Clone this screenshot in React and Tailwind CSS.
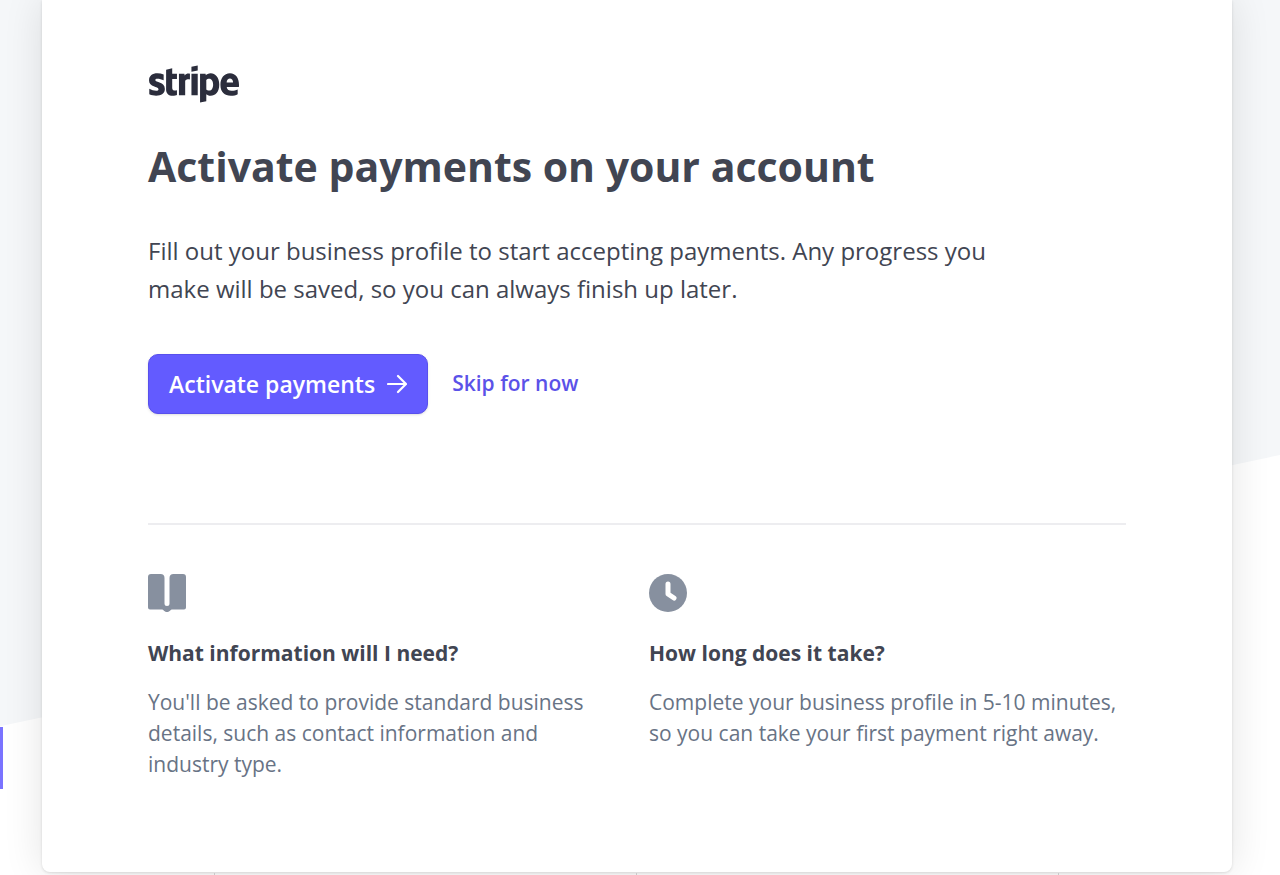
import { FaStripe } from "react-icons/fa"

const BookIcon = () => (
  <svg viewBox="0 0 38 38" className="h-[38px] w-[38px]" fill="currentColor" aria-hidden="true">
    <path d="M3 0h9.500a4 4 0 0 1 4 4v25.500a2.500 2.500 0 0 0 5 0V4a4 4 0 0 1 4-4H35a3 3 0 0 1 3 3v30.500a2 2 0 0 1-2 2H24.500c-1.200 0-1.600.3-2.200 1-.7.900-1.900 1.500-3.300 1.500s-2.600-.6-3.300-1.500c-.6-.7-1-1-2.200-1H2a2 2 0 0 1-2-2V3a3 3 0 0 1 3-3z" />
  </svg>
)

const ClockIcon = () => (
  <svg viewBox="0 0 38 38" className="h-[38px] w-[38px]" fill="none" aria-hidden="true">
    <circle cx="19" cy="19" r="19" fill="currentColor" />
    <path d="M19 10v10l6 4" stroke="white" strokeWidth="5" strokeLinecap="round" strokeLinejoin="round" />
  </svg>
)

const ArrowIcon = () => (
  <svg viewBox="0 0 20 20" className="h-5 w-5" fill="none" aria-hidden="true">
    <path d="M1 10h18M11 2l8 8-8 8" stroke="currentColor" strokeWidth="2.2" strokeLinecap="round" strokeLinejoin="round" />
  </svg>
)

const details = [
  {
    icon: BookIcon,
    title: "What information will I need?",
    text: "You'll be asked to provide standard business details, such as contact information and industry type.",
  },
  {
    icon: ClockIcon,
    title: "How long does it take?",
    text: "Complete your business profile in 5-10 minutes, so you can take your first payment right away.",
  },
]

export default function App() {
  return (
    <div className="grid min-h-screen overflow-hidden bg-white font-['Open_Sans',sans-serif] text-[#414552]">
      {/* Slanted page background */}
      <div className="col-start-1 row-start-1 bg-[#f5f7f9] [clip-path:polygon(0_0,100%_0,100%_52%,0_83%)]" />
      <div className="col-start-1 row-start-1 mb-[86px] h-[62px] w-[3px] self-end bg-[#7a73ff]" />
      {/* Column lines of the page behind the dialog */}
      <div className="z-20 col-start-1 row-start-1 mr-[221px] ml-[214px] grid h-[2px] grid-cols-2 divide-x divide-[#c8c8c8] self-end border-x border-[#c8c8c8]">
        <div />
        <div />
      </div>

      <main className="z-10 col-start-1 row-start-1 mr-12 mb-[3px] ml-[42px] rounded-b-lg bg-white px-[106px] pt-12 pb-[92px] shadow-[0_0_40px_rgba(0,0,0,0.11),0_1px_3px_rgba(0,0,0,0.12)]">
        <FaStripe className="h-[72px] w-[92px] text-[#2b2d3c]" role="img" aria-label="stripe" />

        <h1 className="mt-4 text-[41px] leading-[60px] font-bold">Activate payments on your account</h1>
        <p className="mt-9 max-w-[860px] text-2xl leading-[38px]">
          Fill out your business profile to start accepting payments. Any progress you make will be saved, so you can
          always finish up later.
        </p>

        <div className="mt-[46px] flex items-center gap-6">
          <button
            type="button"
            className="flex h-[60px] items-center gap-3 rounded-[10px] border border-[#5850ec] bg-[#635bff] px-5 text-[23px] font-semibold text-white shadow-sm"
          >
            Activate payments
            <ArrowIcon />
          </button>
          <a href="#skip" className="text-[21px] font-semibold text-[#5b52e8]">
            Skip for now
          </a>
        </div>

        <section className="mt-[109px] grid grid-cols-2 gap-6 border-t-2 border-[#ededf0] pt-[49px]">
          {details.map((item) => (
            <div key={item.title}>
              <div className="text-[#87909f]">
                <item.icon />
              </div>
              <h2 className="mt-[25px] text-[21px] leading-8 font-bold">{item.title}</h2>
              <p className="mt-[18px] pr-2 text-[21px] leading-[31px] text-[#687385]">{item.text}</p>
            </div>
          ))}
        </section>
      </main>
    </div>
  )
}
